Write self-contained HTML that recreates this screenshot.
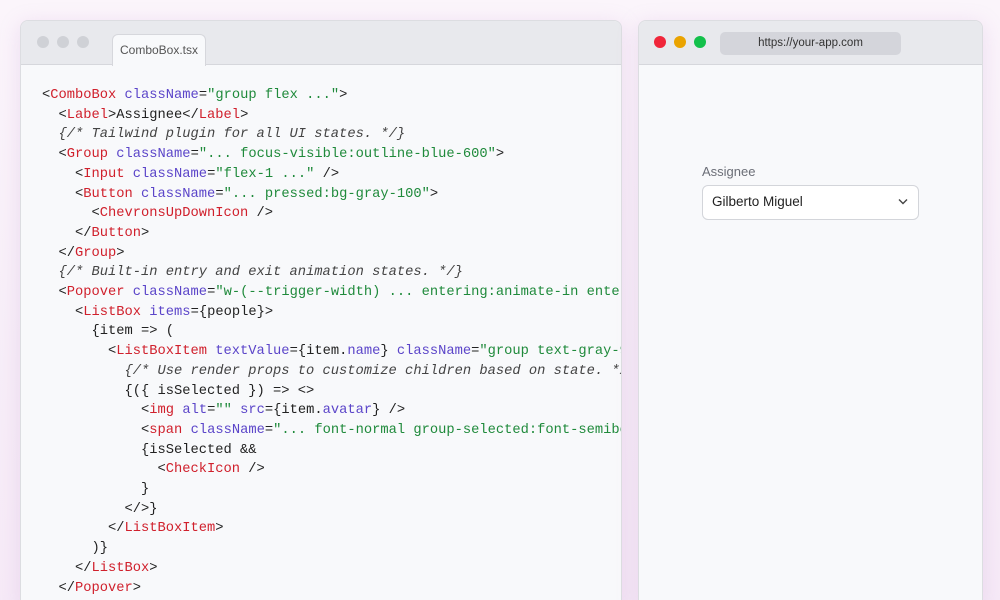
<!DOCTYPE html>
<html><head><meta charset="utf-8"><style>
*{margin:0;padding:0;box-sizing:border-box}
html,body{width:1000px;height:600px;overflow:hidden}
body{background:linear-gradient(180deg,#fbf5fb 0%,#f7eef8 60%,#f6eaf7 100%);font-family:"Liberation Sans",sans-serif;position:relative}
.win{position:absolute;background:#f8f9fb;border:1px solid #dcdde1;border-radius:8px;overflow:hidden;box-shadow:0 4px 20px rgba(200,150,210,.25)}
.bar{height:44px;background:#e8e9ed;border-bottom:1px solid #d6d7dc;position:relative}
.dot{position:absolute;top:15px;width:12px;height:12px;border-radius:50%}
.tab{position:absolute;left:91px;top:13px;width:94px;height:32px;background:#f8f9fb;border:1px solid #d6d7dc;border-bottom:none;border-radius:6px 6px 0 0;font-size:12px;color:#555;text-align:center;line-height:30px}
pre{position:absolute;left:21px;top:65px;font-family:"Liberation Mono",monospace;font-size:13.75px;line-height:19.7px;color:#222;white-space:pre}
.t{color:#d0202c}.a{color:#5b45c9}.s{color:#1f8a3b}.c{color:#444;font-style:italic}
</style></head><body>
<div class="win" style="left:20px;top:20px;width:602px;height:590px">
<div class="bar">
<div class="dot" style="left:16px;background:#cfd1d6"></div>
<div class="dot" style="left:36px;background:#cfd1d6"></div>
<div class="dot" style="left:56px;background:#cfd1d6"></div>
<div class="tab">ComboBox.tsx</div>
</div>
<pre>&lt;<span class="t">ComboBox</span> <span class="a">className</span>=<span class="s">"group flex ..."</span>&gt;
  &lt;<span class="t">Label</span>&gt;Assignee&lt;/<span class="t">Label</span>&gt;
  <span class="c">{/* Tailwind plugin for all UI states. */}</span>
  &lt;<span class="t">Group</span> <span class="a">className</span>=<span class="s">"... focus-visible:outline-blue-600"</span>&gt;
    &lt;<span class="t">Input</span> <span class="a">className</span>=<span class="s">"flex-1 ..."</span> /&gt;
    &lt;<span class="t">Button</span> <span class="a">className</span>=<span class="s">"... pressed:bg-gray-100"</span>&gt;
      &lt;<span class="t">ChevronsUpDownIcon</span> /&gt;
    &lt;/<span class="t">Button</span>&gt;
  &lt;/<span class="t">Group</span>&gt;
  <span class="c">{/* Built-in entry and exit animation states. */}</span>
  &lt;<span class="t">Popover</span> <span class="a">className</span>=<span class="s">"w-(--trigger-width) ... entering:animate-in entering:fade-in"</span>&gt;
    &lt;<span class="t">ListBox</span> <span class="a">items</span>={people}&gt;
      {item =&gt; (
        &lt;<span class="t">ListBoxItem</span> <span class="a">textValue</span>={item.<span class="a">name</span>} <span class="a">className</span>=<span class="s">"group text-gray-900"</span>&gt;
          <span class="c">{/* Use render props to customize children based on state. */}</span>
          {({ isSelected }) =&gt; &lt;&gt;
            &lt;<span class="t">img</span> <span class="a">alt</span>=<span class="s">""</span> <span class="a">src</span>={item.<span class="a">avatar</span>} /&gt;
            &lt;<span class="t">span</span> <span class="a">className</span>=<span class="s">"... font-normal group-selected:font-semibold"</span>&gt;
            {isSelected &amp;&amp;
              &lt;<span class="t">CheckIcon</span> /&gt;
            }
          &lt;/&gt;}
        &lt;/<span class="t">ListBoxItem</span>&gt;
      )}
    &lt;/<span class="t">ListBox</span>&gt;
  &lt;/<span class="t">Popover</span>&gt;</pre>
</div>
<div class="win" style="left:638px;top:20px;width:345px;height:590px">
<div class="bar">
<div class="dot" style="left:15px;background:#f0263a"></div>
<div class="dot" style="left:35px;background:#eaa300"></div>
<div class="dot" style="left:55px;background:#13c04b"></div>
<div style="position:absolute;left:81px;top:11px;width:181px;height:23px;background:#d4d5db;border-radius:5px;font-size:11.5px;color:#333;text-align:center;line-height:23px">https://your-app.com</div>
</div>
<div style="position:absolute;left:63px;top:143px;font-size:13px;color:#6b6e77">Assignee</div>
<div style="position:absolute;left:63px;top:164px;width:217px;height:35px;background:#fff;border:1.5px solid #d3d5da;border-radius:6px;font-size:13.5px;color:#222;line-height:32px;padding-left:9px">Gilberto Miguel
<svg style="position:absolute;right:10px;top:12px" width="10" height="7" viewBox="0 0 10 7"><path d="M1 1.5L5 5.5L9 1.5" fill="none" stroke="#444" stroke-width="1.4"/></svg></div>
</div>
</body></html>
